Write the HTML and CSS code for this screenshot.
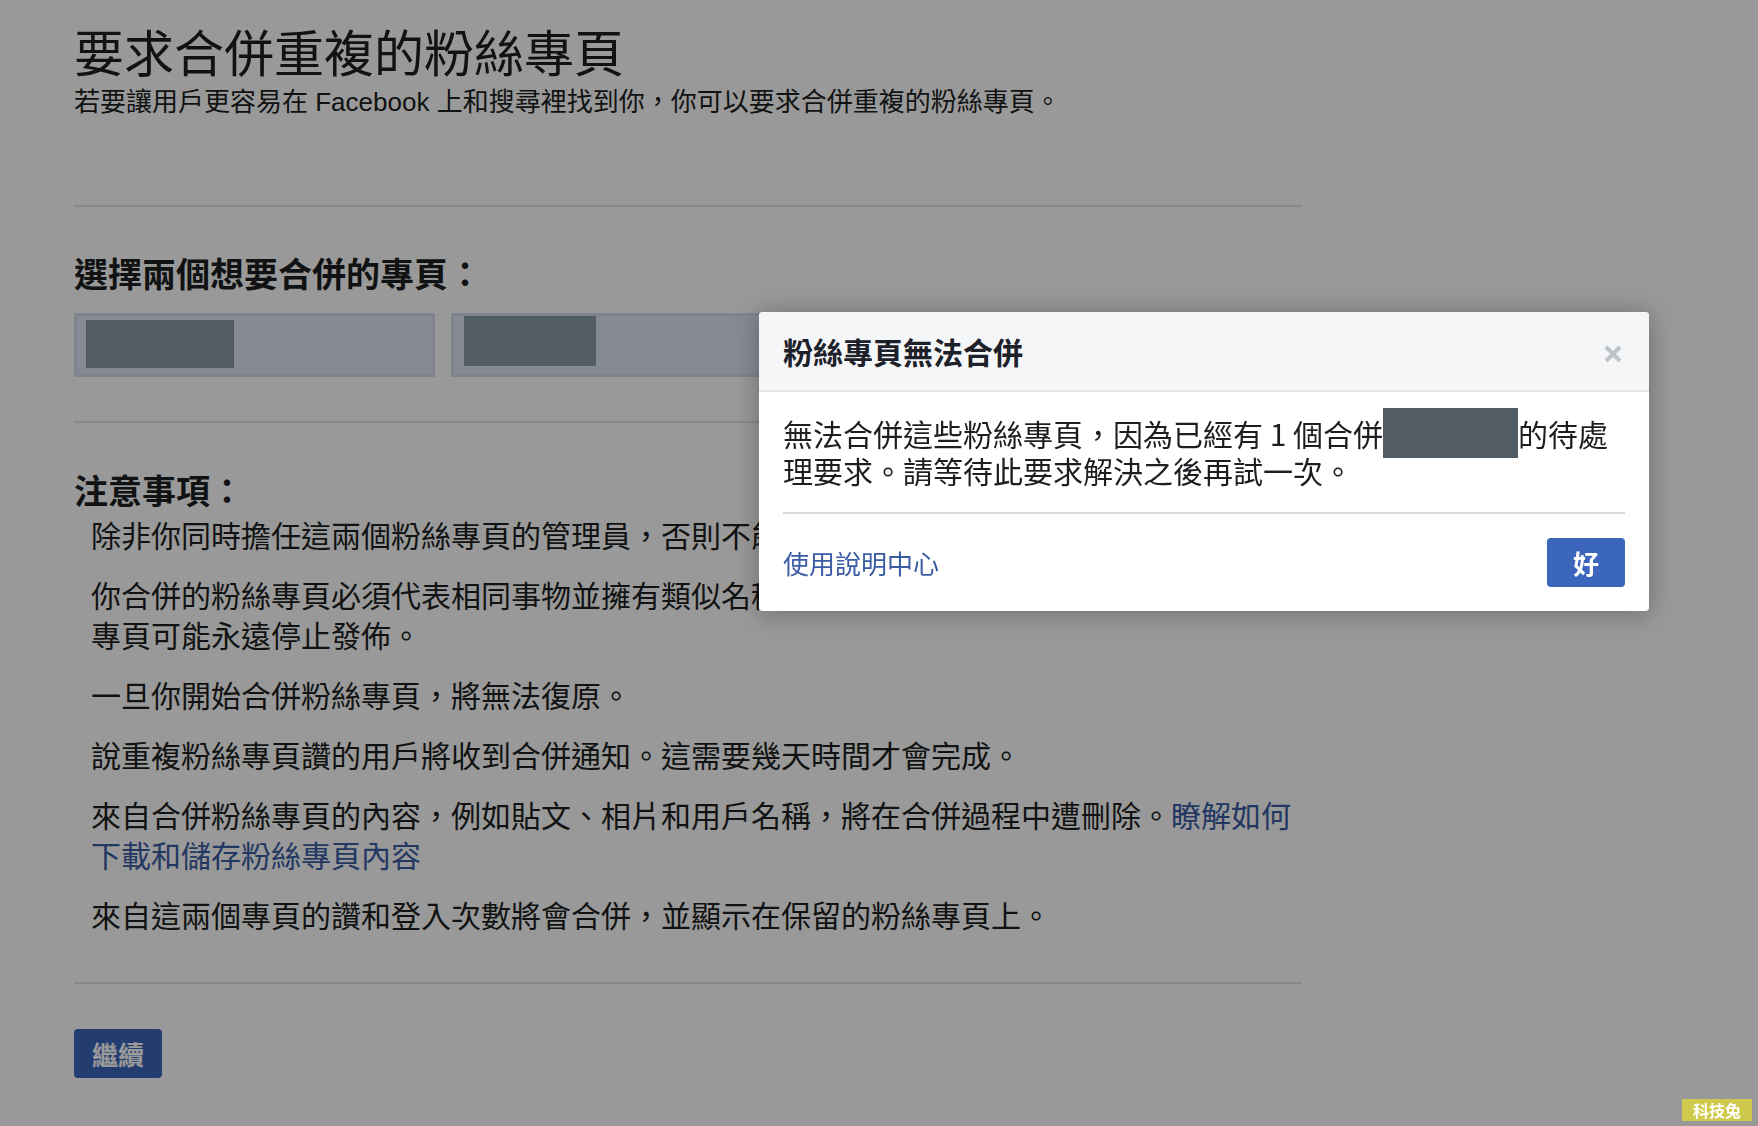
FILE: index.html
```html
<!DOCTYPE html>
<html lang="zh-Hant">
<head>
<meta charset="utf-8">
<title>要求合併重複的粉絲專頁</title>
<link rel="stylesheet" href="styles.css">
</head>
<body>
<main class="page">
  <h1 class="title">要求合併重複的粉絲專頁</h1>
  <p class="subtitle">若要讓用戶更容易在<span class="en"> Facebook </span>上和搜尋裡找到你，你可以要求合併重複的粉絲專頁。</p>
  <hr class="rule rule-top">
  <section class="pick">
    <h2 class="section-title">選擇兩個想要合併的專頁：</h2>
    <div class="page-fields">
      <div class="page-field"><span class="mask mask-a"></span></div>
      <div class="page-field"><span class="mask mask-b"></span></div>
    </div>
  </section>
  <hr class="rule rule-mid">
  <section class="notes">
    <h2 class="section-title">注意事項：</h2>
    <ul class="note-list">
      <li>除非你同時擔任這兩個粉絲專頁的管理員，否則不能合併粉絲專頁。</li>
      <li>你合併的粉絲專頁必須代表相同事物並擁有類似名稱和地址（如適用），否則其中一個粉絲專頁可能永遠停止發佈。</li>
      <li>一旦你開始合併粉絲專頁，將無法復原。</li>
      <li>說重複粉絲專頁讚的用戶將收到合併通知。這需要幾天時間才會完成。</li>
      <li>來自合併粉絲專頁的內容，例如貼文、相片和用戶名稱，將在合併過程中遭刪除。<a class="link" href="#">瞭解如何下載和儲存粉絲專頁內容</a></li>
      <li>來自這兩個專頁的讚和登入次數將會合併，並顯示在保留的粉絲專頁上。</li>
    </ul>
  </section>
  <hr class="rule rule-end">
  <button class="btn btn-continue" type="button">繼續</button>
</main>

<div class="backdrop"></div>

<div class="dialog" role="dialog" aria-labelledby="dlg-title">
  <div class="dialog-head">
    <h2 class="dialog-title" id="dlg-title">粉絲專頁無法合併</h2>
    <button class="close" type="button" aria-label="關閉">
      <svg width="20" height="20" viewBox="0 0 20 20" aria-hidden="true"><path d="M3 3L17 17M17 3L3 17" stroke="#bec3c9" stroke-width="4" fill="none"/></svg>
    </button>
  </div>
  <div class="dialog-body">
    <p class="dialog-text">無法合併這些粉絲專頁，因為已經有 1 個合併<span class="mask-inline"></span>的待處理要求。請等待此要求解決之後再試一次。</p>
    <div class="dialog-foot">
      <a class="link help-link" href="#">使用說明中心</a>
      <button class="btn btn-ok" type="button">好</button>
    </div>
  </div>
</div>

<div class="watermark">科技兔</div>
</body>
</html>
```

FILE: styles.css
```css
* {
  box-sizing: border-box;
}

html,
body {
  margin: 0;
}

body {
  position: relative;
  width: 1758px;
  height: 1126px;
  overflow: hidden;
  background: #ffffff;
  color: #1c1e21;
  font-family: "Noto Sans CJK TC", "Noto Sans CJK SC", sans-serif;
}

.page {
  width: 1302px;
  padding: 22px 0 0 74px;
}

.title {
  margin: 0;
  font-size: 50px;
  line-height: 56px;
  font-weight: 400;
}

.subtitle {
  margin: 6px 0 0;
  font-size: 26px;
  line-height: 32px;
}

.en {
  font-family: "Liberation Sans", Arial, sans-serif;
  line-height: 1;
}

.rule {
  margin: 0;
  border: 0;
  height: 2px;
  background: #e3e3e3;
}

.rule-top {
  margin-top: 89px;
}

.rule-mid {
  margin-top: 44px;
}

.rule-end {
  margin-top: 48px;
}

.section-title {
  margin: 0;
  font-size: 34px;
  line-height: 40px;
  font-weight: 700;
}

.pick {
  margin-top: 46px;
}

.page-fields {
  display: flex;
  gap: 16px;
  margin-top: 20px;
}

.page-field {
  width: 361px;
  height: 64px;
  border: 3px solid #d5dceb;
  background: #dfe6f7;
}

.mask {
  display: block;
  background: #8999a8;
}

.mask-a {
  width: 148px;
  height: 48px;
  margin: 4px 0 0 9px;
}

.mask-b {
  width: 132px;
  height: 50px;
  margin: 0 0 0 10px;
}

.notes {
  margin-top: 47px;
}

.note-list {
  list-style: none;
  margin: 4px 0 0;
  padding: 0 0 0 17px;
  font-size: 30px;
  line-height: 40px;
}

.note-list li + li {
  margin-top: 20px;
}

.link {
  color: #3a5ca4;
  text-decoration: none;
}

.btn {
  display: block;
  height: 49px;
  padding: 0 26px;
  border: 0;
  border-radius: 4px;
  background: #3c66bb;
  color: #ffffff;
  font-family: "Noto Sans CJK TC", sans-serif;
  font-size: 26px;
  line-height: 49px;
  font-weight: 700;
}

.btn-continue {
  margin-top: 45px;
  padding: 0 18px;
}

/* overlay + dialog */

.backdrop {
  position: fixed;
  inset: 0;
  background: rgba(0, 0, 0, 0.4);
}

.dialog {
  position: absolute;
  left: 759px;
  top: 312px;
  width: 890px;
  background: #ffffff;
  border-radius: 4px;
  overflow: hidden;
  box-shadow: 0 2px 26px rgba(0, 0, 0, 0.3);
}

.dialog-head {
  display: flex;
  align-items: center;
  justify-content: space-between;
  height: 80px;
  padding: 0 26px 0 24px;
  background: #f5f6f7;
  border-bottom: 2px solid #e5e5e5;
}

.dialog-title {
  margin: 0;
  font-size: 30px;
  line-height: 38px;
  font-weight: 700;
  color: #1d2129;
}

.close {
  width: 20px;
  height: 20px;
  margin-top: 5px;
  padding: 0;
  border: 0;
  background: none;
}

.close svg {
  display: block;
}

.dialog-body {
  padding: 23px 24px 0;
}

.dialog-text {
  margin: 0;
  padding-bottom: 23px;
  border-bottom: 2px solid #dadde1;
  font-size: 30px;
  line-height: 37px;
}

.mask-inline {
  display: inline-block;
  width: 135px;
  height: 50px;
  margin: -7px 0 -6px;
  vertical-align: top;
  background: #525c65;
}

.dialog-foot {
  display: flex;
  align-items: center;
  justify-content: space-between;
  padding: 24px 0;
}

.help-link {
  font-size: 26px;
  line-height: 32px;
}

.watermark {
  position: fixed;
  right: 6px;
  bottom: 5px;
  width: 70px;
  height: 22px;
  background: #cfca4c;
  color: #ffffff;
  font-size: 16px;
  line-height: 22px;
  font-weight: 700;
  text-align: center;
}
```
